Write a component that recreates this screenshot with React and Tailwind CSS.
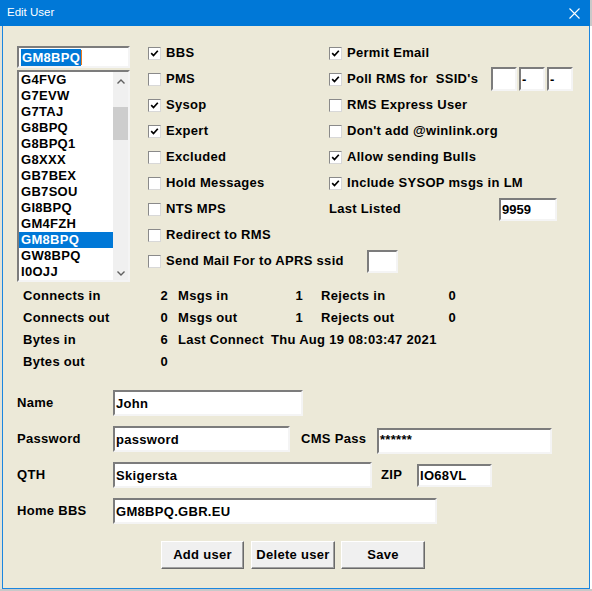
import React from 'react'

const users = ['G4FVG', 'G7EVW', 'G7TAJ', 'G8BPQ', 'G8BPQ1', 'G8XXX', 'GB7BEX', 'GB7SOU', 'GI8BPQ', 'GM4FZH', 'GM8BPQ', 'GW8BPQ', 'I0OJJ']

function Check({ checked }) {
  return (
    <span className="flex h-[13px] w-[13px] shrink-0 items-center justify-center border border-t-[#8a8a8a] border-l-[#8a8a8a] border-b-[#d8d8d8] border-r-[#d8d8d8] bg-white">
      {checked && (
        <svg width="9" height="9" viewBox="0 0 9 9">
          <path d="M1.2 4.2 L3.5 6.6 L7.8 1.8" stroke="#000" strokeWidth="1.7" fill="none" />
        </svg>
      )}
    </span>
  )
}

function Box({ className = '', children }) {
  return (
    <div className={`flex shrink-0 items-center border-2 border-t-[#7c7c7c] border-l-[#7c7c7c] border-b-[#f4f4f4] border-r-[#f4f4f4] bg-white pl-[1px] text-[13px] font-bold leading-none ${className}`}>
      {children}
    </div>
  )
}

function CheckRow({ checked, label }) {
  return (
    <div className="flex h-[26px] items-center gap-[5px] whitespace-pre">
      <Check checked={checked} />
      <span>{label}</span>
    </div>
  )
}

function Btn({ children, className = '' }) {
  return (
    <button
      type="button"
      className={`h-[28px] border border-t-white border-l-white border-b-[#6a6a6a] border-r-[#6a6a6a] bg-[#f0f0f0] text-[13px] font-bold tracking-[0.3px] shadow-[inset_-1px_-1px_0_#a0a0a0] ${className}`}
    >
      {children}
    </button>
  )
}

export default function App() {
  return (
    <div className="h-[591px] w-[592px] overflow-hidden bg-[#c9c9c9] font-['Liberation_Sans',Arial,sans-serif] text-black">
      <div className="flex h-[26px] w-[590px] items-center justify-between bg-[#0078d7] pl-[7px] pr-[10px] text-[11.5px] text-white">
        <span>Edit User</span>
        <svg width="11" height="11" viewBox="0 0 11 11">
          <path d="M0.5 0.5 L10.5 10.5 M10.5 0.5 L0.5 10.5" stroke="#fff" strokeWidth="1.1" />
        </svg>
      </div>
      <div className="flex">
        <div className="h-[563px] w-[2px] bg-[#e4e2d6]" />
        <div className="h-[563px] w-[588px] border-x border-b border-[#1a86e0] bg-[#ece9d8] pl-[14px] pt-[14px] text-[13px] font-bold tracking-[0.3px]">
          {/* top section */}
          <div className="flex">
            <div className="flex w-[113px] flex-col gap-[2px] pt-[6px]">
              <Box className="h-[22px]">
                <span className="ml-[1px] bg-[#0078d7] px-[1px] py-[2px] text-white">GM8BPQ</span>
                <span className="h-[15px] w-[1px] bg-[#e87a20]" />
              </Box>
              <div className="flex h-[212px] border-2 border-t-[#7c7c7c] border-l-[#7c7c7c] border-b-[#f4f4f4] border-r-[#f4f4f4] bg-white">
                <div className="flex w-[94px] flex-col">
                  {users.map((u) => (
                    <div
                      key={u}
                      className={`flex h-[16px] shrink-0 items-center pl-[2px] ${u === 'GM8BPQ' ? 'bg-[#0078d7] text-white' : ''}`}
                    >
                      {u}
                    </div>
                  ))}
                </div>
                <div className="flex w-[15px] flex-col items-center bg-[#f0f0f0]">
                  <svg className="mt-[7px]" width="8" height="5" viewBox="0 0 8 5">
                    <path d="M0.5 4.5 L4 1 L7.5 4.5" stroke="#606060" strokeWidth="1.4" fill="none" />
                  </svg>
                  <div className="mt-[23px] h-[33px] w-[15px] bg-[#cdcdcd]" />
                  <svg className="mt-auto mb-[4px]" width="8" height="5" viewBox="0 0 8 5">
                    <path d="M0.5 0.5 L4 4 L7.5 0.5" stroke="#606060" strokeWidth="1.4" fill="none" />
                  </svg>
                </div>
              </div>
            </div>

            <div className="ml-[18px] flex w-[181px] flex-col">
              <CheckRow checked label="BBS" />
              <CheckRow label="PMS" />
              <CheckRow checked label="Sysop" />
              <CheckRow checked label="Expert" />
              <CheckRow label="Excluded" />
              <CheckRow label="Hold Messages" />
              <CheckRow label="NTS MPS" />
              <CheckRow label="Redirect to RMS" />
              <div className="flex h-[26px] w-max items-center">
                <Check />
                <span className="ml-[5px] w-[201px]">Send Mail For to APRS ssid</span>
                <Box className="h-[23px] w-[31px]" />
              </div>
            </div>

            <div className="flex w-[244px] flex-col">
              <CheckRow checked label="Permit Email" />
              <div className="flex h-[26px] items-center">
                <Check checked />
                <span className="ml-[5px] whitespace-pre">Poll RMS for  SSID's</span>
                <div className="ml-auto flex gap-[2px]">
                  <Box className="h-[24px] w-[26px]" />
                  <Box className="h-[24px] w-[26px]">-</Box>
                  <Box className="h-[24px] w-[26px]">-</Box>
                </div>
              </div>
              <CheckRow label="RMS Express User" />
              <CheckRow label="Don't add @winlink.org" />
              <CheckRow checked label="Allow sending Bulls" />
              <CheckRow checked label="Include SYSOP msgs in LM" />
              <div className="flex h-[26px] items-center">
                <span className="w-[170px]">Last Listed</span>
                <Box className="h-[23px] w-[58px] tracking-normal">9959</Box>
              </div>
            </div>
          </div>

          {/* stats */}
          <div className="ml-[6px] mt-[3px] flex flex-col">
            <div className="flex h-[22px] items-center">
              <div className="flex w-[145px] justify-between"><span>Connects in</span><span>2</span></div>
              <div className="ml-[10px] flex w-[125px] justify-between"><span>Msgs in</span><span>1</span></div>
              <div className="ml-[18px] flex w-[135px] justify-between"><span>Rejects in</span><span>0</span></div>
            </div>
            <div className="flex h-[22px] items-center">
              <div className="flex w-[145px] justify-between"><span>Connects out</span><span>0</span></div>
              <div className="ml-[10px] flex w-[125px] justify-between"><span>Msgs out</span><span>1</span></div>
              <div className="ml-[18px] flex w-[135px] justify-between"><span>Rejects out</span><span>0</span></div>
            </div>
            <div className="flex h-[22px] items-center">
              <div className="flex w-[145px] justify-between"><span>Bytes in</span><span>6</span></div>
              <span className="ml-[10px] w-[93px]">Last Connect</span>
              <span>Thu Aug 19 08:03:47 2021</span>
            </div>
            <div className="flex h-[22px] items-center">
              <div className="flex w-[145px] justify-between"><span>Bytes out</span><span>0</span></div>
            </div>
          </div>

          {/* form */}
          <div className="mt-[17px] flex flex-col gap-[10px]">
            <div className="flex h-[26px] items-center">
              <span className="w-[96px]">Name</span>
              <Box className="h-[26px] w-[190px]">John</Box>
            </div>
            <div className="flex h-[26px] items-start">
              <span className="w-[96px] self-center">Password</span>
              <Box className="h-[26px] w-[177px]">password</Box>
              <span className="ml-[11px] w-[76px] self-center">CMS Pass</span>
              <Box className="mt-[2px] h-[26px] w-[175px] items-start pt-[3px] text-[12px]">******</Box>
            </div>
            <div className="flex h-[26px] items-center">
              <span className="w-[96px]">QTH</span>
              <Box className="h-[26px] w-[259px]">Skigersta</Box>
              <span className="ml-[9px] w-[36px]">ZIP</span>
              <Box className="h-[23px] w-[75px]">IO68VL</Box>
            </div>
            <div className="flex h-[26px] items-center">
              <span className="w-[96px]">Home BBS</span>
              <Box className="h-[26px] w-[324px]">GM8BPQ.GBR.EU</Box>
            </div>
          </div>

          {/* buttons */}
          <div className="ml-[144px] mt-[17px] flex">
            <Btn className="w-[83px]">Add user</Btn>
            <Btn className="ml-[7px] w-[84px]">Delete user</Btn>
            <Btn className="ml-[6px] w-[84px]">Save</Btn>
          </div>
        </div>
        <div className="h-[563px] w-[2px] bg-white" />
      </div>
    </div>
  )
}
